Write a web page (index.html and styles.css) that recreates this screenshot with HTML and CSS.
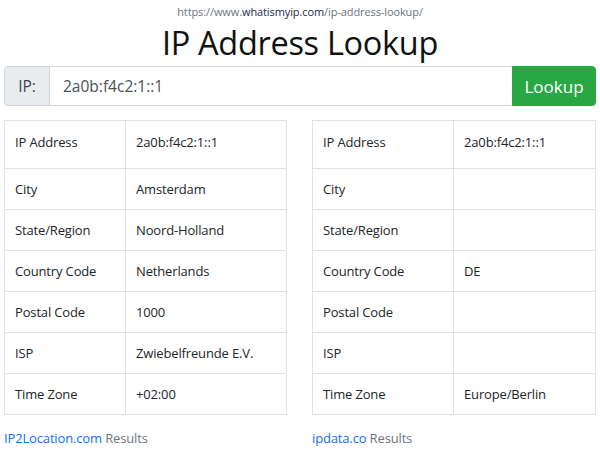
FILE: index.html
```html
<!DOCTYPE html>
<html>
<head>
<meta charset="utf-8">
<link rel="stylesheet" href="styles.css">
</head>
<body>
<div class="page">
  <div class="url">https://www.<span class="dom">whatismyip.com</span>/ip-address-lookup/</div>
  <h1 class="title">IP Address Lookup</h1>
  <div class="input-group">
    <span class="addon">IP:</span>
    <span class="field">2a0b:f4c2:1::1</span>
    <span class="btn">Lookup</span>
  </div>
  <div class="results">
    <div class="col">
      <table class="tbl tbl-left">
        <tr class="first"><td class="k">IP Address</td><td>2a0b:f4c2:1::1</td></tr>
        <tr><td class="k">City</td><td>Amsterdam</td></tr>
        <tr><td class="k">State/Region</td><td>Noord-Holland</td></tr>
        <tr><td class="k">Country Code</td><td>Netherlands</td></tr>
        <tr><td class="k">Postal Code</td><td>1000</td></tr>
        <tr><td class="k">ISP</td><td>Zwiebelfreunde E.V.</td></tr>
        <tr><td class="k">Time Zone</td><td>+02:00</td></tr>
      </table>
      <div class="src"><a class="link">IP2Location.com</a> Results</div>
    </div>
    <div class="col">
      <table class="tbl tbl-right">
        <tr class="first"><td class="k">IP Address</td><td>2a0b:f4c2:1::1</td></tr>
        <tr><td class="k">City</td><td></td></tr>
        <tr><td class="k">State/Region</td><td></td></tr>
        <tr><td class="k">Country Code</td><td>DE</td></tr>
        <tr><td class="k">Postal Code</td><td></td></tr>
        <tr><td class="k">ISP</td><td></td></tr>
        <tr><td class="k">Time Zone</td><td>Europe/Berlin</td></tr>
      </table>
      <div class="src"><a class="link">ipdata.co</a> Results</div>
    </div>
  </div>
</div>
</body>
</html>
```
FILE: styles.css
```css
html, body {
  margin: 0;
  padding: 0;
  background: #fff;
}
body {
  font-family: "Open Sans", "Noto Sans", sans-serif;
  color: #212529;
}
.page {
  width: 592px;
  padding: 0 4px 0 4px;
}
.url {
  text-align: center;
  font-size: 11px;
  line-height: 14px;
  padding-top: 5px;
  color: #6c757d;
  letter-spacing: -0.1px;
}
.url .dom {
  color: #1b2a4a;
}
.title {
  margin: 0;
  padding-top: 2px;
  text-align: center;
  font-weight: 400;
  font-size: 32.5px;
  line-height: 44px;
  color: #111;
  letter-spacing: -0.3px;
  height: 45px;
}
.input-group {
  display: flex;
  height: 40px;
  box-sizing: border-box;
}
.addon {
  display: flex;
  align-items: center;
  justify-content: center;
  width: 46px;
  box-sizing: border-box;
  background: #e9ecef;
  border: 1px solid #ced4da;
  border-radius: 4px 0 0 4px;
  font-size: 15.5px;
  color: #3d444b;
}
.field {
  flex: 1;
  display: flex;
  align-items: center;
  padding-left: 13px;
  border-top: 1px solid #ced4da;
  border-bottom: 1px solid #ced4da;
  font-size: 15.5px;
  color: #495057;
}
.btn {
  display: flex;
  align-items: center;
  justify-content: center;
  width: 84px;
  background: #28a745;
  border: 1px solid #28a745;
  border-radius: 0 4px 4px 0;
  color: #fff;
  font-size: 17px;
  box-sizing: border-box;
}
.results {
  display: grid;
  grid-template-columns: 283px 284px;
  column-gap: 25px;
  margin-top: 14px;
}
.tbl {
  border-collapse: collapse;
  width: 100%;
  font-size: 13px;
  color: #212529;
}
.tbl td {
  border: 1px solid #dee2e6;
  padding: 0 10px;
  height: 40px;
  letter-spacing: -0.15px;
}
.tbl tr.first td {
  height: 41px;
  padding-bottom: 6px;
}
.tbl-left td.k {
  width: 100px;
}
.tbl-right td.k {
  width: 120px;
}
.src {
  margin-top: 14px;
  font-size: 13px;
  color: #6c757d;
  letter-spacing: -0.15px;
}
.link {
  color: #0d6efd;
  text-decoration: none;
}
```
